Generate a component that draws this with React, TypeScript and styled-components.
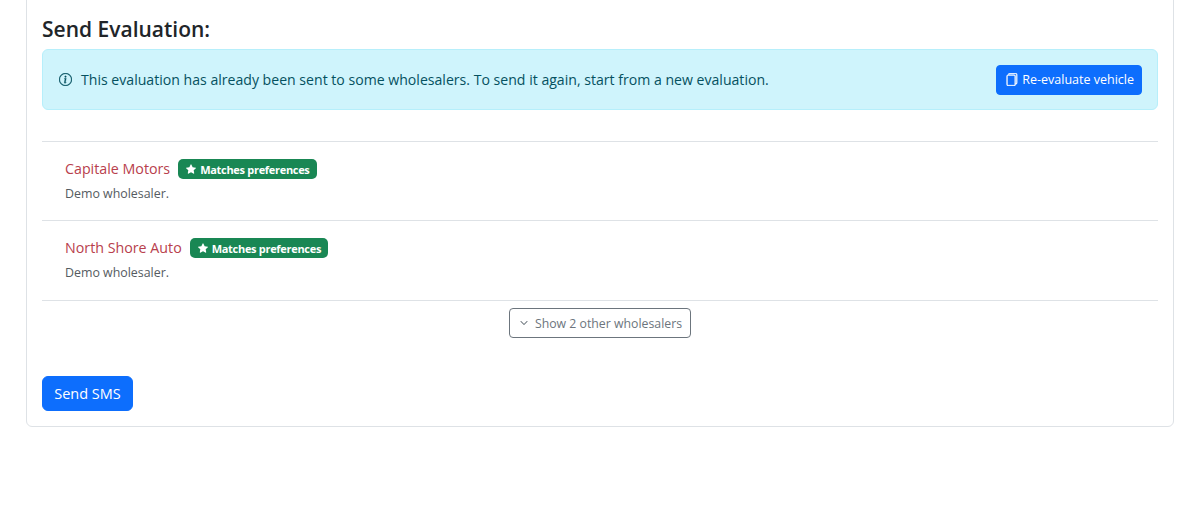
import React from 'react'
import styled, { createGlobalStyle } from 'styled-components'
import { BsChevronDown, BsFiles, BsInfoCircle, BsStarFill } from 'react-icons/bs'

const GlobalStyle = createGlobalStyle`
  html, body {
    margin: 0;
    padding: 0;
    background: #fff;
    overflow: hidden;
  }
  body {
    font-family: "Open Sans", "Noto Sans", "Liberation Sans", sans-serif;
    color: #212529;
  }
`

const Page = styled.div`
  height: 525px;
  padding: 0 26px;
  box-sizing: border-box;
  overflow: hidden;
`

const Card = styled.section`
  margin-top: -10px;
  height: 437px;
  box-sizing: border-box;
  padding: 25px 15px 0;
  background: #fff;
  border: 1px solid #dee2e6;
  border-radius: 6px;
`

const Title = styled.h5`
  margin: 0;
  height: 26px;
  font-size: 21px;
  line-height: 26px;
  font-weight: 600;
  color: #212529;
`

const Alert = styled.div`
  display: flex;
  align-items: center;
  justify-content: space-between;
  margin-top: 7px;
  height: 61px;
  box-sizing: border-box;
  padding: 0 15px 0 16px;
  background: #cff4fc;
  border: 1px solid #b6effb;
  border-radius: 6px;
  color: #055160;
`

const AlertText = styled.div`
  display: flex;
  align-items: center;
  gap: 9px;
  font-size: 14.1px;
  svg {
    width: 13px;
    height: 13px;
    stroke: currentColor;
    stroke-width: 0.4;
  }
`

const SmallButton = styled.button`
  display: inline-flex;
  align-items: center;
  gap: 4px;
  height: 30px;
  padding: 0 7px 0 8px;
  border: 1px solid #0d6efd;
  border-radius: 4px;
  background: #0d6efd;
  color: #fff;
  font: inherit;
  font-size: 12.5px;
  svg {
    width: 13px;
    height: 13px;
    stroke: currentColor;
    stroke-width: 0.5;
  }
`

const List = styled.div`
  margin-top: 31px;
  border-top: 1px solid #dee2e6;
`

const Row = styled.div`
  height: 79px;
  box-sizing: border-box;
  padding: 16px 23px 0;
  border-bottom: 1px solid #dee2e6;

  &:last-child {
    height: 80px;
  }
`

const NameLine = styled.div`
  display: flex;
  align-items: center;
  gap: 8px;
  height: 22px;
`

const Name = styled.a`
  padding-bottom: 2px;
  font-size: 14.25px;
  color: #b8404c;
`

const Badge = styled.span`
  display: inline-flex;
  align-items: center;
  gap: 4px;
  height: 20px;
  padding: 0 7px 0 8px;
  border-radius: 5px;
  background: #198754;
  color: #fff;
  font-size: 11px;
  font-weight: 700;
  letter-spacing: -0.3px;
  svg {
    width: 10px;
    height: 10px;
  }
`

const Note = styled.div`
  margin-top: 5px;
  font-size: 12.4px;
  line-height: 18px;
  color: #555b61;
`

const MoreLine = styled.div`
  display: flex;
  justify-content: center;
  margin-top: 7px;
`

const MoreButton = styled.button`
  display: inline-flex;
  align-items: center;
  gap: 7px;
  height: 30px;
  padding: 0 8px 0 10px;
  background: #fff;
  border: 1px solid #6c757d;
  border-radius: 4px;
  color: #6c757d;
  font: inherit;
  font-size: 12.3px;
  svg {
    width: 8px;
    height: 8px;
    stroke: currentColor;
    stroke-width: 1;
  }
`

const SendButton = styled.button`
  display: block;
  margin-top: 38px;
  width: 91px;
  height: 35px;
  padding: 0;
  background: #0d6efd;
  border: 1px solid #0d6efd;
  border-radius: 6px;
  color: #fff;
  font: inherit;
  font-size: 14.5px;
`

const wholesalers = ['Capitale Motors', 'North Shore Auto']

export default function App() {
  return (
    <Page>
      <GlobalStyle />
      <Card>
        <Title>Send Evaluation:</Title>
        <Alert>
          <AlertText>
            <BsInfoCircle />
            This evaluation has already been sent to some wholesalers. To send it again, start from a new evaluation.
          </AlertText>
          <SmallButton>
            <BsFiles />
            Re-evaluate vehicle
          </SmallButton>
        </Alert>
        <List>
          {wholesalers.map(name => (
            <Row key={name}>
              <NameLine>
                <Name>{name}</Name>
                <Badge>
                  <BsStarFill />
                  Matches preferences
                </Badge>
              </NameLine>
              <Note>Demo wholesaler.</Note>
            </Row>
          ))}
        </List>
        <MoreLine>
          <MoreButton>
            <BsChevronDown />
            Show 2 other wholesalers
          </MoreButton>
        </MoreLine>
        <SendButton>Send SMS</SendButton>
      </Card>
    </Page>
  )
}
